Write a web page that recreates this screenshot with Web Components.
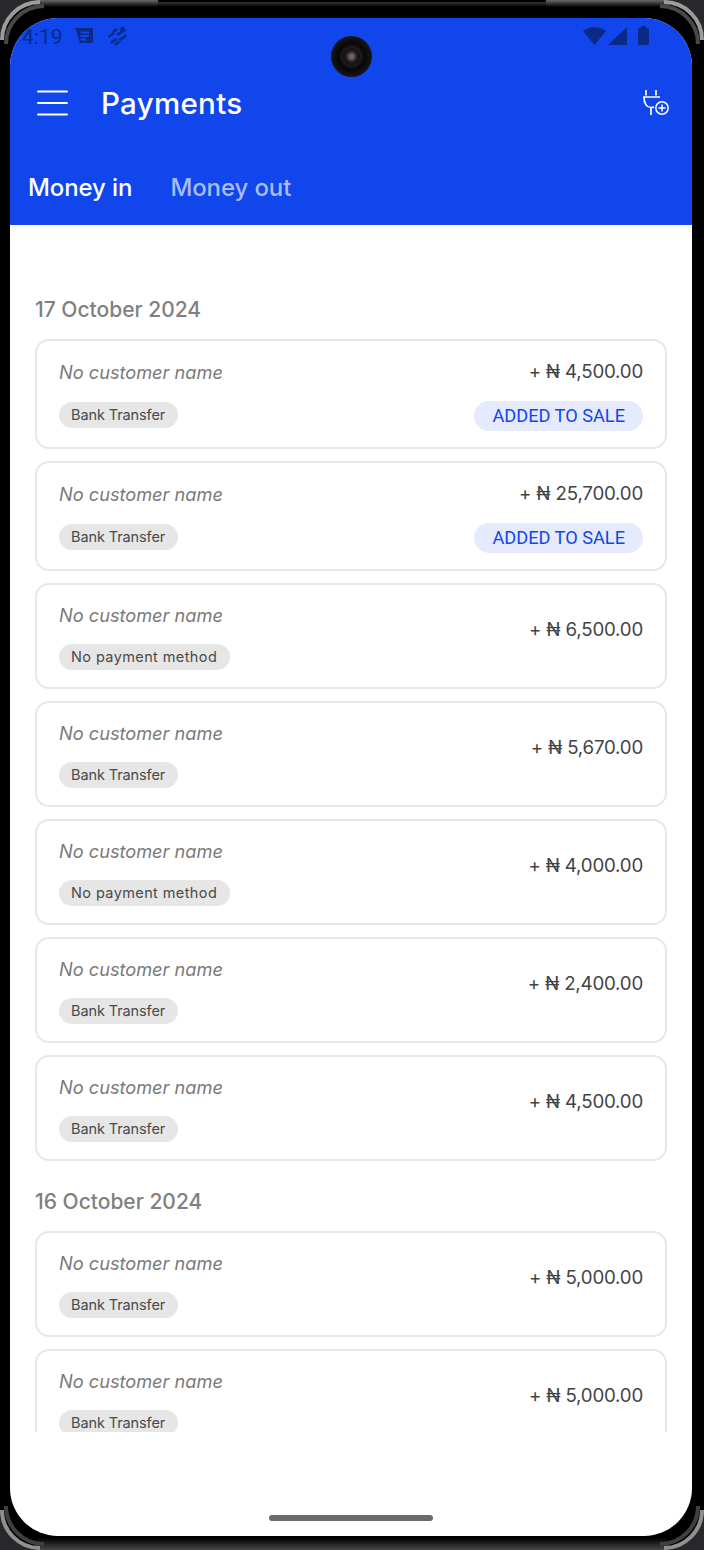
<!DOCTYPE html>
<html>
<head>
<meta charset="utf-8">
<title>Payments</title>
<style>
  html, body { margin: 0; padding: 0; background: #000; }
  body { font-family: "Inter", "Liberation Sans", sans-serif; }
</style>
</head>
<body>
<phone-frame>
  <app-header title="Payments"></app-header>
  <payment-list>
    <date-group date="17 October 2024">
      <payment-card amount="+ ₦ 4,500.00" method="Bank Transfer" added></payment-card>
      <payment-card amount="+ ₦ 25,700.00" method="Bank Transfer" added></payment-card>
      <payment-card amount="+ ₦ 6,500.00" method="No payment method"></payment-card>
      <payment-card amount="+ ₦ 5,670.00" method="Bank Transfer"></payment-card>
      <payment-card amount="+ ₦ 4,000.00" method="No payment method"></payment-card>
      <payment-card amount="+ ₦ 2,400.00" method="Bank Transfer"></payment-card>
      <payment-card amount="+ ₦ 4,500.00" method="Bank Transfer"></payment-card>
    </date-group>
    <date-group date="16 October 2024">
      <payment-card amount="+ ₦ 5,000.00" method="Bank Transfer"></payment-card>
      <payment-card amount="+ ₦ 5,000.00" method="Bank Transfer"></payment-card>
    </date-group>
  </payment-list>
</phone-frame>

<script>
class PhoneFrame extends HTMLElement {
  constructor() {
    super();
    this.attachShadow({ mode: 'open' });
  }

  connectedCallback() {
    this.shadowRoot.innerHTML = `
      <style>
        :host {
          display: block;
          position: relative;
          width: 704px;
          height: 1550px;
          box-sizing: border-box;
          padding: 18px 12px 14px 10px;
          background: #000;
          overflow: hidden;
        }
        .bezel { position: absolute; left: 0; top: 0; }
        .screen {
          position: relative;
          height: 100%;
          display: flex;
          flex-direction: column;
          background: #fff;
          border-radius: 48px;
          overflow: hidden;
        }
        .home {
          position: absolute;
          left: 259px;
          bottom: 15px;
          width: 164px;
          height: 6px;
          border-radius: 3px;
          background: #6b6b6b;
        }
        .camera {
          position: absolute;
          left: 331px;
          top: 36px;
          width: 41px;
          height: 41px;
          border-radius: 50%;
          background: radial-gradient(circle at 50% 50%, #7a5d6a 0 2px, #2a2320 5px, #101010 8px, #1e1e1e 9px, #070707 13px, #161616 20px);
        }
      </style>
      <svg class="bezel" width="704" height="1550" viewBox="0 0 704 1550" fill="none">
        <defs>
          <linearGradient id="edgeTop" x1="0" y1="0" x2="0" y2="1">
            <stop offset="0" stop-color="#6a6a6a"/>
            <stop offset="1" stop-color="#000"/>
          </linearGradient>
          <linearGradient id="edgeBottom" x1="0" y1="0" x2="0" y2="1">
            <stop offset="0" stop-color="#000"/>
            <stop offset="1" stop-color="#484848"/>
          </linearGradient>
        </defs>
        <rect width="704" height="1550" fill="#26282c"/>
        <rect width="704" height="1550" rx="42" fill="#000"/>
        <rect x="36" y="0" width="122" height="7" fill="url(#edgeTop)"/>
        <rect x="546" y="0" width="122" height="7" fill="url(#edgeTop)"/>
        <rect x="158" y="2" width="388" height="5" fill="url(#edgeTop)" opacity=".5"/>
        <rect x="36" y="1538" width="632" height="12" fill="url(#edgeBottom)"/>
        <g>
          <path d="M2 40 A38 38 0 0 1 40 2" stroke="#9c9c9c" stroke-width="4"/>
          <path d="M6 44 A38 38 0 0 1 44 6" stroke="#484848" stroke-width="4"/>
          <path d="M702 40 A38 38 0 0 0 664 2" stroke="#9c9c9c" stroke-width="4"/>
          <path d="M698 44 A38 38 0 0 0 660 6" stroke="#484848" stroke-width="4"/>
          <path d="M2 1510 A38 38 0 0 0 40 1548" stroke="#909090" stroke-width="4"/>
          <path d="M6 1506 A38 38 0 0 0 44 1544" stroke="#404040" stroke-width="4"/>
          <path d="M702 1510 A38 38 0 0 1 664 1548" stroke="#909090" stroke-width="4"/>
          <path d="M698 1506 A38 38 0 0 1 660 1544" stroke="#404040" stroke-width="4"/>
        </g>
      </svg>
      <div class="screen">
        <slot></slot>
        <div class="home"></div>
      </div>
      <div class="camera"></div>
    `;
  }
}

class AppHeader extends HTMLElement {
  constructor() {
    super();
    this.attachShadow({ mode: 'open' });
  }

  connectedCallback() {
    const title = this.getAttribute('title') || '';
    this.shadowRoot.innerHTML = `
      <style>
        :host {
          display: block;
          flex: none;
          height: 207px;
          background: #1046ec;
          color: #fff;
          font-family: "Inter", "Liberation Sans", sans-serif;
        }
        .status {
          display: flex;
          align-items: center;
          height: 36px;
          padding: 0 43px 0 12px;
          color: #0b2a86;
          font: 400 21px Roboto, sans-serif;
        }
        .status .time { width: 44px; margin-right: 9px; margin-top: 1px; }
        .status svg { display: block; }
        .status .left { margin-right: 13px; }
        .status .spacer { flex: 1; }
        .top {
          display: flex;
          align-items: center;
          height: 64px;
          margin-top: 17px;
          padding: 0 22px 0 27px;
        }
        .top h1 {
          flex: 1;
          margin: 0 0 0 33px;
          font-size: 29.500px;
          font-weight: 500;
          letter-spacing: .3px;
        }
        .tabs {
          display: flex;
          gap: 38px;
          padding: 38px 0 0 18px;
          font-size: 24px;
          font-weight: 500;
          letter-spacing: -.1px;
        }
        .tabs .off { color: #a9bcf7; }
      </style>
      <div class="status">
        <span class="time">4:19</span>
        <svg class="left" width="19" height="17" viewBox="0 0 19 17" fill="#0b2a86">
          <path d="M0 0H18V13.500Q18 15 16.500 15H4.500V13L1 2Q.7 1 0 0ZM5.500 3.500V5.500H14V3.500ZM5.500 7V9H14V7ZM5.500 10.500V12.500H11V10.500Z" fill-rule="evenodd"/>
        </svg>
        <svg width="21" height="20" viewBox="0 0 21 20" stroke="#0b2a86" stroke-width="2.600" fill="none">
          <path d="M6 6L10 3M13 4L17 1.500M1.500 11L7 7M10 9L18.500 3.500M4 17L9.500 13M12 14.500L19 9.500M8 19L12 16"/>
        </svg>
        <span class="spacer"></span>
        <svg width="66" height="20" viewBox="0 0 66 20" fill="#0b2a86">
          <path d="M0 5Q11 -3 23 5L11.500 19Z"/>
          <path d="M25 19L44 1V19Z"/>
          <rect x="55" y="2" width="11" height="17" rx="1.500"/>
          <rect x="58" y="0" width="5" height="3"/>
        </svg>
      </div>
      <div class="top">
        <svg width="31" height="26" viewBox="0 0 31 26" stroke="#fff" stroke-width="2" stroke-linecap="round">
          <path d="M1 1.500H30M1 13H30M1 24.500H30"/>
        </svg>
        <h1>${title}</h1>
        <svg width="28" height="26" viewBox="0 0 28 26" fill="none" stroke="#fff" stroke-width="1.700">
          <path d="M4 0V5.500M14 0V5.500M1 7H18M2 7C2 14 5 17.500 9 17.500C10 17.500 11 17.300 12 17M9 17.500V25"/>
          <circle cx="20" cy="18" r="6.200" stroke-width="1.500"/>
          <path d="M16.500 18H23.500M20 14.500V21.500" stroke-width="1.500"/>
        </svg>
      </div>
      <div class="tabs">
        <span>Money in</span>
        <span class="off">Money out</span>
      </div>
    `;
  }
}

class PaymentList extends HTMLElement {
  constructor() {
    super();
    this.attachShadow({ mode: 'open' });
  }

  connectedCallback() {
    this.shadowRoot.innerHTML = `
      <style>
        :host {
          display: block;
          flex: none;
          height: 1207px;
          box-sizing: border-box;
          padding: 0 25px;
          overflow: hidden;
          background: #fff;
        }
      </style>
      <slot></slot>
    `;
  }
}

class DateGroup extends HTMLElement {
  constructor() {
    super();
    this.attachShadow({ mode: 'open' });
  }

  connectedCallback() {
    this.shadowRoot.innerHTML = `
      <style>
        :host {
          display: flex;
          flex-direction: column;
          gap: 12px;
          padding-top: 69px;
        }
        :host(:not(:first-child)) { padding-top: 25px; }
        h2 {
          margin: 0 0 3px;
          height: 30px;
          color: #808080;
          font: 500 21px/32px "Inter", "Liberation Sans", sans-serif;
        }
      </style>
      <h2>${this.getAttribute('date')}</h2>
      <slot></slot>
    `;
  }
}

class PaymentCard extends HTMLElement {
  constructor() {
    super();
    this.attachShadow({ mode: 'open' });
  }

  connectedCallback() {
    const added = this.hasAttribute('added');
    const method = this.getAttribute('method');
    const amount = this.getAttribute('amount');
    // the longer label runs wider than Inter sets it
    const tracking = method.length > 13 ? '.4px' : '-.1px';
    this.shadowRoot.innerHTML = `
      <style>
        :host {
          display: grid;
          grid-template-columns: 1fr auto;
          align-items: center;
          box-sizing: border-box;
          height: ${added ? 110 : 106}px;
          padding: 0 22px;
          border: 2px solid #e8e8e8;
          border-radius: 14px;
          background: #fff;
          font-family: "Inter", "Liberation Sans", sans-serif;
        }
        .left {
          display: flex;
          flex-direction: column;
          align-items: flex-start;
          gap: ${added ? 18 : 16.5}px;
          margin-top: ${added ? 0 : 0.5}px;
        }
        .name {
          color: #7a7a7a;
          font-size: 18.200px;
          font-style: italic;
          line-height: 24px;
        }
        .chip {
          padding: 0 12.500px 0 12px;
          height: 26px;
          line-height: 26px;
          border-radius: 13px;
          background: #e6e6e6;
          color: #4a4a4a;
          font-size: 14.500px;
          letter-spacing: ${tracking};
        }
        .right {
          display: flex;
          flex-direction: column;
          align-items: flex-end;
          gap: 17px;
          margin: ${added ? '2px 0 0' : '0 0 12px'};
        }
        .amount {
          color: #444;
          font-size: 18.700px;
          line-height: 24px;
          letter-spacing: -.2px;
        }
        .sale {
          height: 30px;
          padding: 0 18px;
          border-radius: 15px;
          background: #e5ebfc;
          color: #1046ec;
          font: 400 18.200px/30px Roboto, sans-serif;
        }
      </style>
      <div class="left">
        <span class="name">No customer name</span>
        <span class="chip">${method}</span>
      </div>
      <div class="right">
        <span class="amount">${amount}</span>
        ${added ? '<span class="sale">ADDED TO SALE</span>' : ''}
      </div>
    `;
  }
}

customElements.define('phone-frame', PhoneFrame);
customElements.define('app-header', AppHeader);
customElements.define('payment-list', PaymentList);
customElements.define('date-group', DateGroup);
customElements.define('payment-card', PaymentCard);
</script>
</body>
</html>
